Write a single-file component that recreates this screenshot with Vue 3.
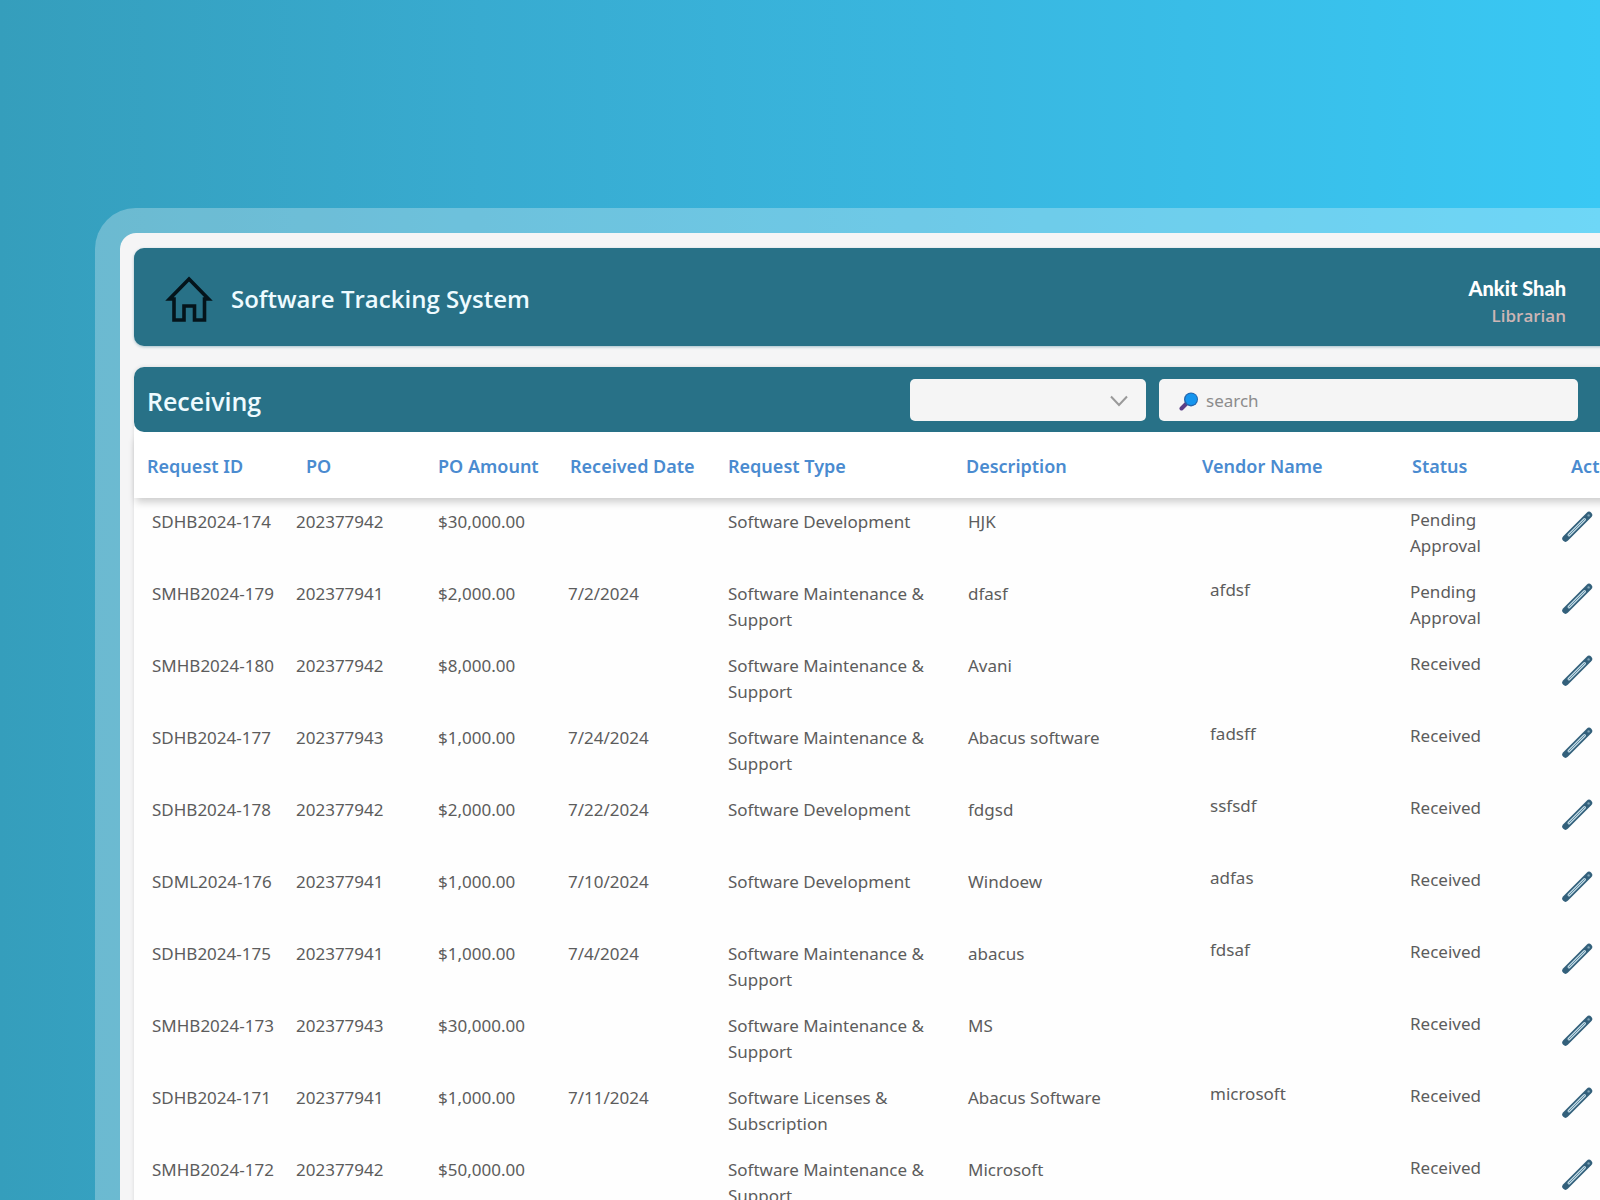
<script setup>
import { ref, computed } from 'vue'

const filter = ref('')
const query = ref('')

const columns = [
  { key: 'id', label: 'Request ID' },
  { key: 'po', label: 'PO' },
  { key: 'amount', label: 'PO Amount' },
  { key: 'date', label: 'Received Date' },
  { key: 'type', label: 'Request Type' },
  { key: 'description', label: 'Description' },
  { key: 'vendor', label: 'Vendor Name' },
  { key: 'status', label: 'Status' },
]

const DEV = 'Software Development'
const MAINT = 'Software Maintenance & Support'
const LICENSE = 'Software Licenses & Subscription'

const requests = [
  { id: 'SDHB2024-174', po: '202377942', amount: '$30,000.00', date: '', type: DEV, description: 'HJK', vendor: '', status: 'Pending Approval' },
  { id: 'SMHB2024-179', po: '202377941', amount: '$2,000.00', date: '7/2/2024', type: MAINT, description: 'dfasf', vendor: 'afdsf', status: 'Pending Approval' },
  { id: 'SMHB2024-180', po: '202377942', amount: '$8,000.00', date: '', type: MAINT, description: 'Avani', vendor: '', status: 'Received' },
  { id: 'SDHB2024-177', po: '202377943', amount: '$1,000.00', date: '7/24/2024', type: MAINT, description: 'Abacus software', vendor: 'fadsff', status: 'Received' },
  { id: 'SDHB2024-178', po: '202377942', amount: '$2,000.00', date: '7/22/2024', type: DEV, description: 'fdgsd', vendor: 'ssfsdf', status: 'Received' },
  { id: 'SDML2024-176', po: '202377941', amount: '$1,000.00', date: '7/10/2024', type: DEV, description: 'Windoew', vendor: 'adfas', status: 'Received' },
  { id: 'SDHB2024-175', po: '202377941', amount: '$1,000.00', date: '7/4/2024', type: MAINT, description: 'abacus', vendor: 'fdsaf', status: 'Received' },
  { id: 'SMHB2024-173', po: '202377943', amount: '$30,000.00', date: '', type: MAINT, description: 'MS', vendor: '', status: 'Received' },
  { id: 'SDHB2024-171', po: '202377941', amount: '$1,000.00', date: '7/11/2024', type: LICENSE, description: 'Abacus Software', vendor: 'microsoft', status: 'Received' },
  { id: 'SMHB2024-172', po: '202377942', amount: '$50,000.00', date: '', type: MAINT, description: 'Microsoft', vendor: '', status: 'Received' },
]

const visibleRequests = computed(() => {
  const q = query.value.trim().toLowerCase()
  return requests.filter((r) => {
    if (filter.value && r.status !== filter.value) return false
    return !q || Object.values(r).some((v) => v.toLowerCase().includes(q))
  })
})
</script>

<template>
  <div class="page">
    <div class="frame">
      <header class="app-header">
        <a href="#" class="home" aria-label="Home">
          <svg viewBox="0 0 48 48" width="48" height="48" fill="none" stroke="#04141b" stroke-width="3.6">
            <path d="M24 5 L43.5 25 L39.5 25 L39.5 46 L29.5 46 L29.5 32 L19 32 L19 46 L9 46 L9 25 L4.5 25 Z" />
          </svg>
        </a>
        <h1>Software Tracking System</h1>
        <div class="user">
          <strong>Ankit Shah</strong>
          <span>Librarian</span>
        </div>
      </header>

      <main class="card">
        <div class="toolbar">
          <h2>Receiving</h2>
          <div class="select-box">
            <select v-model="filter" aria-label="Status filter">
              <option value=""></option>
              <option>Pending Approval</option>
              <option>Received</option>
            </select>
            <svg class="chevron" viewBox="0 0 18 12" width="18" height="12" fill="none" stroke="#9a9a9a" stroke-width="2">
              <path d="M1 1.5 L9 10 L17 1.5" />
            </svg>
          </div>
          <label class="search-box">
            <svg viewBox="0 0 20 20" width="20" height="20">
              <path d="M2.5 17.5 L8 12" stroke="#5b3f86" stroke-width="4" stroke-linecap="round" />
              <circle cx="12" cy="8.4" r="7" fill="#2467ae" />
              <circle cx="12.2" cy="8.2" r="5.8" fill="#1595ee" />
            </svg>
            <input v-model="query" type="text" placeholder="search" aria-label="search" />
          </label>
        </div>

        <table>
          <colgroup>
            <col v-for="c in columns" :key="c.key" :class="'w-' + c.key" />
            <col />
          </colgroup>
          <thead>
            <tr>
              <th v-for="c in columns" :key="c.key" :class="c.key">{{ c.label }}</th>
              <th class="action">Action</th>
            </tr>
          </thead>
          <tbody>
            <tr v-for="r in visibleRequests" :key="r.id">
              <td v-for="c in columns" :key="c.key" :class="c.key">{{ r[c.key] }}</td>
              <td class="action">
                <button type="button" :aria-label="'Edit ' + r.id">
                  <svg viewBox="0 0 32 32" width="32" height="32" fill="none" stroke-linecap="round">
                    <path d="M3.5 27.5 L27 4" stroke="#33607b" stroke-width="6.4" />
                    <path d="M7 24 L22.5 8.5" stroke="#c3dbe6" stroke-width="3" />
                    <path d="M7 24 L22.5 8.5" stroke="#5c8aa1" stroke-width="1" />
                    <circle cx="26.6" cy="4.4" r="1.2" fill="#7fa3b7" />
                  </svg>
                </button>
              </td>
            </tr>
          </tbody>
        </table>
      </main>
    </div>
  </div>
</template>

<style>
body {
  margin: 0;
}
</style>

<style scoped>
.page {
  box-sizing: border-box;
  height: 100vh;
  padding: 208px 0 0 95px;
  overflow: hidden;
  background: linear-gradient(to right, #359ebc, #38abd0 30%, #39b7e0 60%, #39c8f4);
  font-family: 'Noto Sans', 'Open Sans', sans-serif;
  font-size: 17px;
  line-height: 26px;
  color: #5c5c5c;
}

/* The window runs off the right and bottom edges of the page */
.frame {
  margin-right: -80px;
  padding: 15px 14px;
  border: 25px solid rgba(255, 255, 255, 0.27);
  border-radius: 41px;
  background: #f5f5f6;
  background-clip: padding-box;
}

.app-header {
  display: flex;
  align-items: center;
  gap: 18px;
  height: 98px;
  padding: 2px 75px 0 31px;
  box-sizing: border-box;
  border-radius: 10px;
  background: #287187;
  box-shadow: 0 1px 3px rgba(40, 113, 135, 0.4);
}

.home {
  display: flex;
}

h1,
h2 {
  flex: 1;
  margin: 0;
  padding-top: 2px;
  font-family: 'Open Sans', 'Noto Sans', sans-serif;
  font-weight: 600;
  line-height: 34px;
  color: #eefbff;
}

h1 {
  font-size: 24px;
}

h2 {
  font-size: 25px;
}

.user {
  display: flex;
  flex-direction: column;
  align-items: flex-end;
  padding-top: 8px;
  line-height: 28px;
}

.user strong {
  font-family: Lato, sans-serif;
  font-size: 20px;
  font-weight: 900;
  color: #fff;
}

.user span {
  font-family: 'Open Sans', 'Noto Sans', sans-serif;
  font-weight: 600;
  color: #cdb5b5;
}

.card {
  margin-top: 21px;
  border-radius: 10px 10px 0 0;
  background: #fefefe;
  box-shadow: 0 0 4px rgba(0, 0, 0, 0.12);
}

.toolbar {
  display: flex;
  align-items: center;
  gap: 13px;
  height: 65px;
  padding: 0 63px 0 13px;
  border-radius: 10px;
  background: #287187;
}

.select-box {
  position: relative;
  width: 236px;
}

.select-box select,
.search-box {
  box-sizing: border-box;
  width: 100%;
  height: 42px;
  border: 0;
  border-radius: 5px;
  background: #f5f5f5;
}

.select-box select {
  display: block;
  appearance: none;
  padding: 0 40px 0 12px;
  font: inherit;
  color: inherit;
}

.chevron {
  position: absolute;
  top: 16px;
  right: 18px;
  pointer-events: none;
}

.search-box {
  display: flex;
  align-items: center;
  gap: 7px;
  width: 419px;
  padding: 2px 20px 0;
}

.search-box input {
  flex: 1;
  min-width: 0;
  padding: 0;
  border: 0;
  outline: 0;
  background: none;
  font: inherit;
  color: inherit;
}

.search-box input::placeholder {
  color: #8c8c8c;
  opacity: 1;
}

table {
  width: 100%;
  table-layout: fixed;
  border-collapse: separate;
  border-spacing: 0;
}

.w-id { width: 154px; }
.w-po { width: 142px; }
.w-amount { width: 130px; }
.w-date { width: 160px; }
.w-type { width: 238px; }
.w-description { width: 236px; }
.w-vendor { width: 208px; }
.w-status { width: 152px; }

thead {
  position: relative;
  box-shadow: 0 6px 8px -2px rgba(0, 0, 0, 0.2);
}

th {
  height: 66px;
  padding: 2px 0 0 8px;
  box-sizing: border-box;
  background: #fff;
  font-size: 18px;
  font-weight: 600;
  text-align: left;
  white-space: nowrap;
  color: #4a8bd0;
}

th.id { padding-left: 13px; }
th.po { padding-left: 18px; }
th.date { padding-left: 10px; }
th.status { padding-left: 10px; }
th.action { padding-left: 17px; }

td {
  height: 72px;
  padding: 11px 20px 0 8px;
  box-sizing: border-box;
  vertical-align: top;
}

td.id { padding-left: 18px; padding-right: 0; }
td.description { padding-left: 10px; }
td.vendor { padding-top: 7px; padding-left: 16px; }
td.status { padding-top: 9px; }
td.action { padding-top: 13px; }

td button {
  display: block;
  padding: 0;
  border: 0;
  background: none;
  cursor: pointer;
}

td svg {
  display: block;
}
</style>
